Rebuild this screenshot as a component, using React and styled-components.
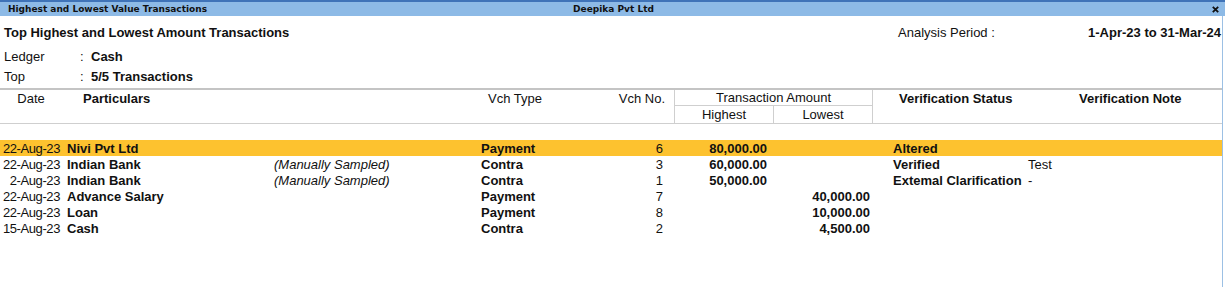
import React from 'react'
import styled, { createGlobalStyle } from 'styled-components'

const GlobalStyle = createGlobalStyle`
  html, body { margin: 0; padding: 0; background: #fff; }
  body { font-family: "Liberation Sans", Arial, sans-serif; font-size: 13px; color: #111; }
`

const rows = [
  { date: '22-Aug-23', name: 'Nivi Pvt Ltd', type: 'Payment', no: '6', high: '80,000.00', status: 'Altered', active: true },
  { date: '22-Aug-23', name: 'Indian Bank', sampled: true, type: 'Contra', no: '3', high: '60,000.00', status: 'Verified', note: 'Test' },
  { date: '2-Aug-23', name: 'Indian Bank', sampled: true, type: 'Contra', no: '1', high: '50,000.00', status: 'Extemal Clarification', note: '-' },
  { date: '22-Aug-23', name: 'Advance Salary', type: 'Payment', no: '7', low: '40,000.00' },
  { date: '22-Aug-23', name: 'Loan', type: 'Payment', no: '8', low: '10,000.00' },
  { date: '15-Aug-23', name: 'Cash', type: 'Contra', no: '2', low: '4,500.00' },
]

const COLS = '62px 212px 207px 120px 73px 99px 99px 150px 1fr'

const App = () => {
  return (
    <Window>
      <GlobalStyle />
      <TitleBar>
        <TitleText>Highest and Lowest Value Transactions</TitleText>
        <TitleText center>Deepika Pvt Ltd</TitleText>
        <Close>
          <svg width="7" height="7" viewBox="0 0 7 7">
            <path d="M0.8 0.8 L6.2 6.2 M6.2 0.8 L0.8 6.2" stroke="#111" strokeWidth="1.8" />
          </svg>
        </Close>
      </TitleBar>

      <Body>
        <Info>
          <InfoTop>
            <ReportTitle>Top Highest and Lowest Amount Transactions</ReportTitle>
            <Period>
              <span>Analysis Period :</span>
              <b>1-Apr-23 to 31-Mar-24</b>
            </Period>
          </InfoTop>
          <InfoLine>
            <Label>Ledger</Label>
            <Colon>:</Colon>
            <b>Cash</b>
          </InfoLine>
          <InfoLine>
            <Label>Top</Label>
            <Colon>:</Colon>
            <b>5/5 Transactions</b>
          </InfoLine>
        </Info>

        <Head>
          <HeadCell style={{ gridColumn: '1', gridRow: '1' }} align="center">Date</HeadCell>
          <HeadCell style={{ gridColumn: '2 / 4', gridRow: '1' }} bold pad="0 0 0 21px">Particulars</HeadCell>
          <HeadCell style={{ gridColumn: '4', gridRow: '1' }} pad="0 0 0 7px">Vch Type</HeadCell>
          <HeadCell style={{ gridColumn: '5', gridRow: '1' }} align="right" pad="0 9px 0 0">Vch No.</HeadCell>
          <AmountHead>Transaction Amount</AmountHead>
          <SubHead style={{ gridColumn: '6' }}>Highest</SubHead>
          <SubHead style={{ gridColumn: '7' }}>Lowest</SubHead>
          <RightDivider />
          <HeadCell style={{ gridColumn: '8', gridRow: '1' }} bold pad="0 0 0 27px">Verification Status</HeadCell>
          <HeadCell style={{ gridColumn: '9', gridRow: '1' }} bold pad="0 0 0 57px">Verification Note</HeadCell>
        </Head>

        <List>
          {rows.map((r, i) => (
            <Row key={`row${i}`} active={r.active}>
              <DateCell>{r.date}</DateCell>
              <NameCell>{r.name}</NameCell>
              <SampledCell>{r.sampled ? '(Manually Sampled)' : ''}</SampledCell>
              <TypeCell>{r.type}</TypeCell>
              <NoCell>{r.no}</NoCell>
              <AmountCell pad="6px">{r.high}</AmountCell>
              <AmountCell pad="2px">{r.low}</AmountCell>
              <StatusCell>{r.status}</StatusCell>
              <NoteCell>{r.note}</NoteCell>
            </Row>
          ))}
        </List>
      </Body>
    </Window>
  )
}

export default App

const Window = styled.div`
  width: 1225px;
  height: 287px;
  display: flex;
  flex-direction: column;
  overflow: hidden;
  background: #fff;
`

const TitleBar = styled.div`
  height: 14px;
  border-top: 2px solid #3f73b8;
  background: #8dbae6;
  display: grid;
  grid-template-columns: 1fr auto 1fr;
  align-items: center;
  padding: 0 6px 0 8px;
  font-family: "DejaVu Sans", Tahoma, sans-serif;
  font-size: 9px;
  font-weight: bold;
  color: #111;
`

const TitleText = styled.div`
  justify-self: ${p => (p.center ? 'center' : 'start')};
  white-space: nowrap;
`

const Close = styled.div`
  justify-self: end;
  display: flex;
  align-items: center;
`

const Body = styled.div`
  flex: 1;
  width: 1222px;
  border-right: 1px solid #9cc0e4;
`

const Info = styled.div`
  padding: 6px 0 2px 4px;
  border-bottom: 2px solid #c4c4c4;
`

const InfoTop = styled.div`
  height: 20px;
  display: flex;
  align-items: center;
  justify-content: space-between;
  margin-bottom: 4px;
`

const ReportTitle = styled.div`
  font-weight: bold;
`

const Period = styled.div`
  display: flex;
  width: 323px;
  justify-content: space-between;
  padding-right: 1px;
`

const InfoLine = styled.div`
  height: 20px;
  display: flex;
  align-items: center;
`

const Label = styled.span`
  width: 76px;
`

const Colon = styled.span`
  width: 11px;
`

const Head = styled.div`
  display: grid;
  grid-template-columns: ${COLS};
  grid-template-rows: 16px 17px;
  border-bottom: 1px solid #cfcfcf;
`

const HeadCell = styled.div`
  display: flex;
  align-items: center;
  justify-content: ${p => (p.align === 'center' ? 'center' : p.align === 'right' ? 'flex-end' : 'flex-start')};
  padding: ${p => p.pad || '0'};
  font-weight: ${p => (p.bold ? 'bold' : 'normal')};
  white-space: nowrap;
`

const AmountHead = styled.div`
  grid-column: 6 / 8;
  grid-row: 1;
  display: flex;
  align-items: center;
  justify-content: center;
  border-left: 1px solid #cfcfcf;
  border-bottom: 1px solid #cfcfcf;
`

const SubHead = styled.div`
  grid-row: 2;
  display: flex;
  align-items: center;
  justify-content: center;
  border-left: 1px solid #cfcfcf;
`

const RightDivider = styled.div`
  grid-column: 8;
  grid-row: 1 / 3;
  border-left: 1px solid #cfcfcf;
`

const List = styled.div`
  padding-top: 16px;
`

const Row = styled.div`
  display: grid;
  grid-template-columns: ${COLS};
  height: 16px;
  align-items: center;
  background: ${p => (p.active ? '#fdc22f' : 'transparent')};
  white-space: nowrap;
`

const DateCell = styled.div`
  text-align: right;
  padding-right: 2px;
  letter-spacing: -0.4px;
`

const NameCell = styled.div`
  font-weight: bold;
  padding-left: 5px;
`

const SampledCell = styled.div`
  font-style: italic;
`

const TypeCell = styled.div`
  font-weight: bold;
`

const NoCell = styled.div`
  text-align: right;
  padding-right: 11px;
`

const AmountCell = styled.div`
  font-weight: bold;
  text-align: right;
  padding-right: ${p => p.pad};
`

const StatusCell = styled.div`
  font-weight: bold;
  padding-left: 21px;
`

const NoteCell = styled.div`
  padding-left: 6px;
`
